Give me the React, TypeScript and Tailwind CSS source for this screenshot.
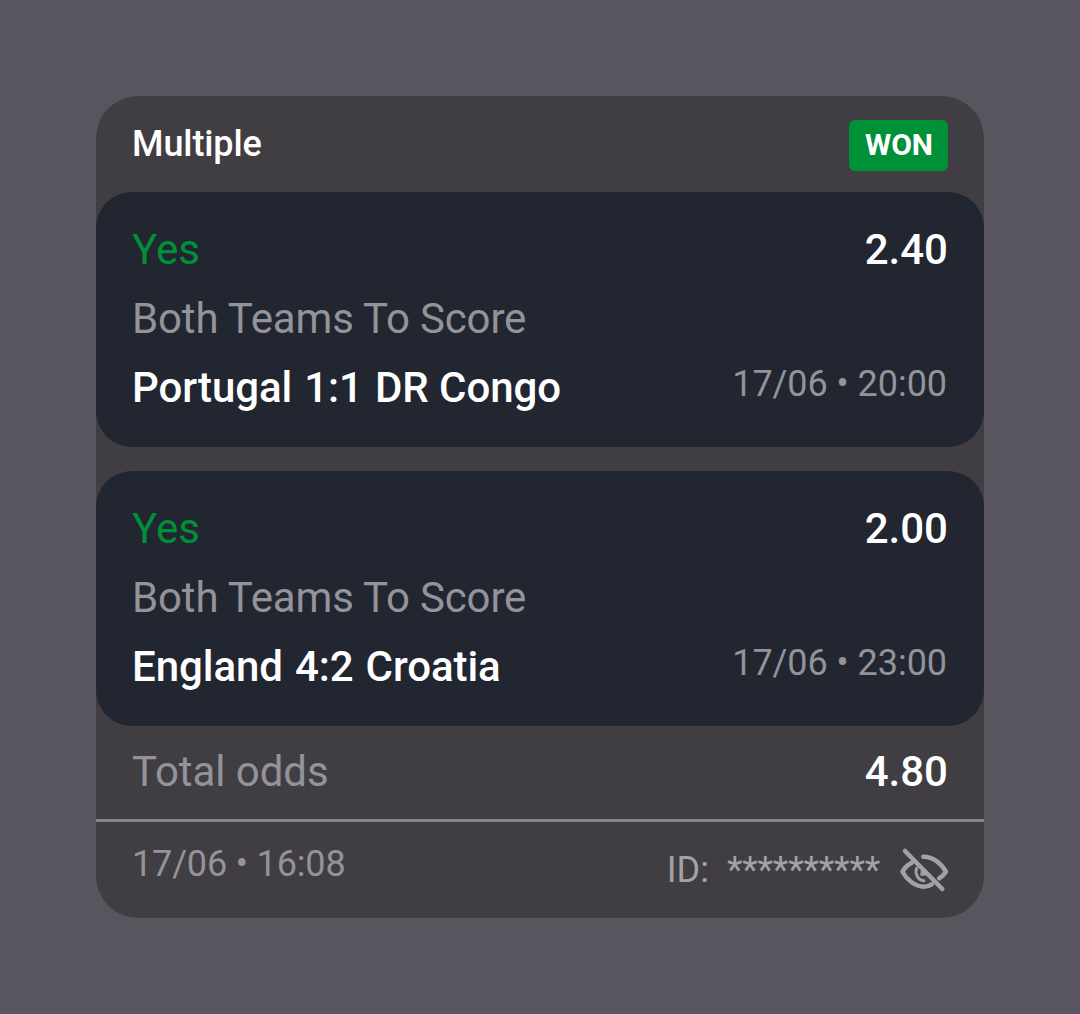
const legs = [
  { odds: "2.40", home: "Portugal", score: "1:1", away: "DR Congo", time: "17/06 • 20:00" },
  { odds: "2.00", home: "England", score: "4:2", away: "Croatia", time: "17/06 • 23:00" },
];

function HiddenEye() {
  return (
    <svg viewBox="0 -2 48 48" className="ml-[20px] h-[48px] w-[48px]" fill="none" stroke="currentColor" strokeWidth={4.5} strokeLinecap="round" strokeLinejoin="round">
      <path d="M5 3 42.3 41" />
      <path d="M11.7 14.7C7.5 17 4 20.5 2.500 23.700 7 32 15 38.700 24 38.700c2.800 0 5.400-.8 7.700-2.300" />
      <path d="M23.300 8.700C32.500 8.500 41 15 46 23.700c-1.700 2.500-4 4.800-6.700 6.600" />
      <path d="M16.700 20.300c-.8 1.400-.9 3.200-.5 5 1 4 4 7.200 7.800 7.400" strokeWidth={3} />
      <path d="M21.500 23 25 27h-4z" fill="currentColor" strokeWidth={1.500} />
    </svg>
  );
}

function Leg({ leg }: { leg: (typeof legs)[number] }) {
  return (
    <div className="flex h-[255px] flex-col rounded-[36px] bg-[#222631] px-[36px] pt-[34px]">
      <div className="flex h-[48px] items-center justify-between">
        <span className="text-[42px] leading-[48px] text-[#009038]">Yes</span>
        <span className="text-[42px] font-medium leading-[48px] text-white">{leg.odds}</span>
      </div>
      <div className="mt-[21px] h-[48px] text-[42px] leading-[48px] tracking-[-0.16px] text-[#939399]">Both Teams To Score</div>
      <div className="mt-[21px] flex h-[48px] items-center justify-between">
        <span className="flex gap-[12px] text-[42px] font-medium leading-[48px] tracking-[-0.06px] text-white">
          <span>{leg.home}</span>
          <span>{leg.score}</span>
          <span>{leg.away}</span>
        </span>
        <span className="mb-[8px] mr-[1px] text-[36px] leading-[48px] tracking-[-0.05px] text-[#939399]">{leg.time}</span>
      </div>
    </div>
  );
}

export default function App() {
  return (
    <div className="flex min-h-screen items-start justify-center bg-[#58555f] pt-[96px] font-['Roboto',sans-serif]">
      <div className="flex w-[888px] flex-col rounded-[42px] bg-[#413e43]">
        <div className="flex h-[96px] items-center justify-between px-[36px]">
          <span className="text-[36px] font-medium leading-[48px] tracking-[-0.1px] text-white">Multiple</span>
          <span className="mt-[2px] flex h-[51px] w-[99px] items-center justify-center rounded-[6px] bg-[#009038] pb-[2px] pl-[1px] text-[30px] font-bold tracking-[-0.1px] text-white">
            WON
          </span>
        </div>
        <div className="flex flex-col gap-[24px]">
          {legs.map((leg) => (
            <Leg key={leg.odds} leg={leg} />
          ))}
        </div>
        <div className="flex h-[93px] items-center justify-between px-[36px] pb-[2px]">
          <span className="text-[42px] leading-[48px] tracking-[-0.06px] text-[#939399]">Total odds</span>
          <span className="text-[42px] font-medium leading-[48px] text-white">4.80</span>
        </div>
        <div className="h-[3px] bg-[#87878b]" />
        <div className="flex h-[96px] items-start justify-between px-[36px] pt-[18px]">
          <span className="text-[36px] leading-[48px] tracking-[-0.15px] text-[#939399]">17/06 • 16:08</span>
          <span className="mt-[6px] flex items-center text-[#a2a2a6]">
            <span className="text-[36px] leading-[48px]">ID:</span>
            <span className="ml-[18px] text-[36px] leading-[48px] tracking-[-0.2px]">**********</span>
            <HiddenEye />
          </span>
        </div>
      </div>
    </div>
  );
}
